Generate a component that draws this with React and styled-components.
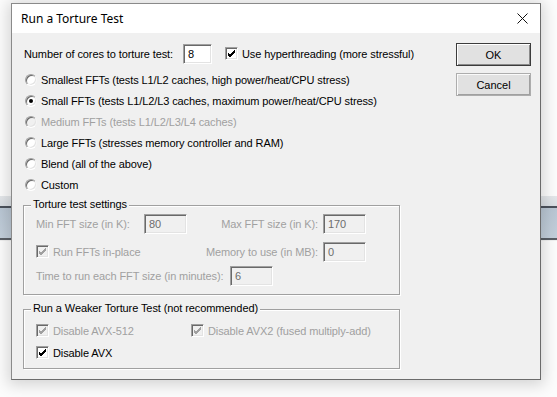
import React from "react";
import styled, { createGlobalStyle } from "styled-components";

const GlobalStyle = createGlobalStyle`
  html, body {
    margin: 0;
    padding: 0;
    background: #fcfcfc;
  }
  body {
    font-family: "Liberation Sans", Arial, sans-serif;
  }
`;

const Desktop = styled.div`
  position: relative;
  width: 557px;
  height: 397px;
  overflow: hidden;
  box-sizing: border-box;
  padding: 3px 0 0 11px;
`;

// blurred window strip behind the dialog
const Backdrop = styled.div`
  position: absolute;
  left: 0;
  right: 0;
  top: 196px;
  height: 45px;
  background: linear-gradient(
    to bottom,
    #e4e7ea 0px,
    #d9dee3 10px,
    #4b525c 10px,
    #4b525c 12px,
    #b9c6d3 12px,
    #c3cfdb 42px,
    #5a5f66 42px,
    #5a5f66 44px,
    #f0f0f0 44px
  );
`;

const Window = styled.div`
  position: relative;
  width: 530px;
  height: 377px;
  box-sizing: border-box;
  border: 1px solid #8a8a8a;
  border-right-color: #6b6b6b;
  border-bottom-color: #6b6b6b;
  box-shadow: 0 2px 14px 3px rgba(0, 0, 0, 0.16);
  display: flex;
  flex-direction: column;
  background: #f0f0f0;
`;

const TitleBar = styled.div`
  height: 29px;
  background: #ffffff;
  display: flex;
  align-items: center;
  justify-content: space-between;
  padding: 0 12px 0 9px;
  font-family: "Noto Sans", "Liberation Sans", sans-serif;
  font-size: 12px;
  color: #000;
`;

const CloseIcon = () => (
  <svg width="11" height="11" viewBox="0 0 11 11">
    <path d="M0.5 0.5 L10.5 10.5 M10.5 0.5 L0.5 10.5" stroke="#111" strokeWidth="1" fill="none" />
  </svg>
);

const Body = styled.div`
  flex: 1;
  display: flex;
  padding: 10px 9px 0 12px;
  font-size: 11px;
  letter-spacing: -0.1px;
  color: #000;
`;

const Main = styled.div`
  flex: 1;
  display: flex;
  flex-direction: column;
`;

const Side = styled.div`
  width: 75px;
  display: flex;
  flex-direction: column;
  gap: 7px;
`;

const Button = styled.button`
  width: 75px;
  height: 23px;
  box-sizing: border-box;
  background: #e1e1e1;
  font-family: "Liberation Sans", Arial, sans-serif;
  font-size: 11px;
  color: #000;
  padding: 0;
  border: 1px solid ${(p) => (p.$default ? "#3c3c3c" : "#adadad")};
  box-shadow: ${(p) =>
    p.$default
      ? "inset 1px 1px 0 #ffffff, inset -1px -1px 0 #8a8a8a"
      : "inset 1px 1px 0 #fafafa, inset -1px -1px 0 #a0a0a0"};
`;

const Row = styled.div`
  height: ${(p) => p.$h || 21}px;
  margin-top: ${(p) => p.$mt || 0}px;
  display: flex;
  align-items: center;
`;

const Label = styled.span`
  color: ${(p) => (p.$disabled ? "#a0a0a0" : "#000")};
  width: ${(p) => (p.$w ? `${p.$w}px` : "auto")};
  flex-shrink: 0;
  white-space: nowrap;
`;

const Field = styled.div`
  width: ${(p) => p.$w || 43}px;
  height: 20px;
  box-sizing: border-box;
  border: 1px solid;
  border-color: #a0a0a0 #ffffff #ffffff #a0a0a0;
  box-shadow: inset 1px 1px 0 #696969, inset -1px -1px 0 #e3e3e3;
  background: ${(p) => (p.$disabled ? "#f0f0f0" : "#ffffff")};
  color: ${(p) => (p.$disabled ? "#6d6d6d" : "#000")};
  padding: 3px 0 0 4px;
  font-size: 11px;
  line-height: 13px;
  flex-shrink: 0;
`;

const Box = styled.span`
  width: 13px;
  height: 13px;
  box-sizing: border-box;
  display: inline-flex;
  align-items: center;
  justify-content: center;
  border: 1px solid;
  border-color: #a0a0a0 #ffffff #ffffff #a0a0a0;
  box-shadow: inset 1px 1px 0 #696969, inset -1px -1px 0 #e3e3e3;
  background: ${(p) => (p.$disabled ? "#f0f0f0" : "#ffffff")};
  flex-shrink: 0;
`;

const Check = styled.label`
  display: flex;
  align-items: center;
  gap: 4px;
  margin-left: ${(p) => p.$ml || 0}px;
  color: ${(p) => (p.$disabled ? "#a0a0a0" : "#000")};
  white-space: nowrap;
`;

const CheckBox = ({ disabled, children, ml }) => (
  <Check $disabled={disabled} $ml={ml}>
    <Box $disabled={disabled}>
      <svg width="9" height="9" viewBox="0 0 9 9">
        <path
          d="M1 4 L3 6 L8 1 M1 5 L3 7 L8 2 M1 6 L3 8 L8 3"
          stroke={disabled ? "#a0a0a0" : "#000"}
          strokeWidth="1"
          fill="none"
        />
      </svg>
    </Box>
    {children}
  </Check>
);

const Circle = styled.span`
  width: 12px;
  height: 12px;
  box-sizing: border-box;
  border-radius: 50%;
  border: 1px solid;
  border-color: #a0a0a0 #f4f4f4 #ffffff #a0a0a0;
  box-shadow: inset 1px 1px 0 #696969, inset -1px -1px 0 #e3e3e3;
  background: ${(p) => (p.$disabled ? "#f0f0f0" : "#ffffff")};
  display: inline-flex;
  align-items: center;
  justify-content: center;
  flex-shrink: 0;
  margin-left: 1px;
`;

const Dot = styled.span`
  width: 4px;
  height: 4px;
  border-radius: 50%;
  background: #000;
`;

const Radio = styled.label`
  display: flex;
  align-items: center;
  gap: 4px;
  height: 21px;
  color: ${(p) => (p.$disabled ? "#a0a0a0" : "#000")};
  white-space: nowrap;
`;

const Option = ({ checked, disabled, children }) => (
  <Radio $disabled={disabled}>
    <Circle $disabled={disabled}>{checked && <Dot />}</Circle>
    {children}
  </Radio>
);

const Group = styled.div`
  position: relative;
  width: 377px;
  height: ${(p) => p.$h}px;
  box-sizing: border-box;
  margin: ${(p) => p.$mt}px 0 0 -1px;
  border: 1px solid #a0a0a0;
  box-shadow: 1px 1px 0 #ffffff, inset 1px 1px 0 #ffffff;
  padding: ${(p) => p.$pt}px 0 0 12px;
  display: flex;
  flex-direction: column;
`;

const Legend = styled.span`
  position: absolute;
  top: -8px;
  left: 7px;
  padding: 0 2px;
  background: #f0f0f0;
  color: #000;
  white-space: nowrap;
`;

const Pair = styled.div`
  display: flex;
  align-items: center;
  width: ${(p) => p.$w}px;
  justify-content: ${(p) => (p.$end ? "flex-end" : "flex-start")};
  gap: ${(p) => (p.$end ? 5 : 0)}px;
`;

export default function App() {
  return (
    <>
      <GlobalStyle />
      <Desktop>
        <Backdrop />
        <Window>
          <TitleBar>
            <span>Run a Torture Test</span>
            <CloseIcon />
          </TitleBar>
          <Body>
            <Main>
              <Row>
                <Label $w={159}>Number of cores to torture test:</Label>
                <Field $w={29}>8</Field>
                <CheckBox ml={13}>Use hyperthreading (more stressful)</CheckBox>
              </Row>
              <div style={{ height: 5 }} />
              <Option>Smallest FFTs (tests L1/L2 caches, high power/heat/CPU stress)</Option>
              <Option checked>Small FFTs (tests L1/L2/L3 caches, maximum power/heat/CPU stress)</Option>
              <Option disabled>Medium FFTs (tests L1/L2/L3/L4 caches)</Option>
              <Option>Large FFTs (stresses memory controller and RAM)</Option>
              <Option>Blend (all of the above)</Option>
              <Option>Custom</Option>

              <Group $h={90} $mt={10} $pt={7}>
                <Legend>Torture test settings</Legend>
                <Row>
                  <Pair $w={163}>
                    <Label $disabled $w={108}>Min FFT size (in K):</Label>
                    <Field $disabled>80</Field>
                  </Pair>
                  <Pair $w={167} $end>
                    <Label $disabled>Max FFT size (in K):</Label>
                    <Field $disabled>170</Field>
                  </Pair>
                </Row>
                <Row $mt={7}>
                  <Pair $w={163}>
                    <CheckBox disabled>Run FFTs in-place</CheckBox>
                  </Pair>
                  <Pair $w={167} $end>
                    <Label $disabled>Memory to use (in MB):</Label>
                    <Field $disabled>0</Field>
                  </Pair>
                </Row>
                <Row $mt={3}>
                  <Label $disabled $w={194}>Time to run each FFT size (in minutes):</Label>
                  <Field $disabled>6</Field>
                </Row>
              </Group>

              <Group $h={60} $mt={14} $pt={10}>
                <Legend>Run a Weaker Torture Test (not recommended)</Legend>
                <Row>
                  <Pair $w={155}>
                    <CheckBox disabled>Disable AVX-512</CheckBox>
                  </Pair>
                  <CheckBox disabled>Disable AVX2 (fused multiply-add)</CheckBox>
                </Row>
                <Row $mt={1}>
                  <CheckBox>Disable AVX</CheckBox>
                </Row>
              </Group>
            </Main>
            <Side>
              <Button $default>OK</Button>
              <Button>Cancel</Button>
            </Side>
          </Body>
        </Window>
      </Desktop>
    </>
  );
}
